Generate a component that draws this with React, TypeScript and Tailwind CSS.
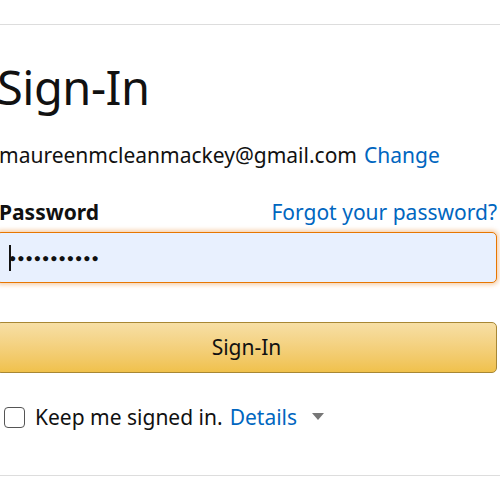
import React from "react";

const App: React.FC = () => {
  return (
    <div className="w-[500px] h-[500px] bg-white overflow-hidden" style={{ fontFamily: "'Noto Sans', Arial, sans-serif" }}>
      <div className="h-[24px]" />
      <div className="border-t border-[#dddddd] w-full" />
      <div className="-ml-[4px] w-[501px] flex flex-col">
        <h1 className="mt-[34px] pl-[1px] text-[47px] leading-[56px] font-normal text-[#111111] tracking-[-0.5px]">Sign-In</h1>
        <div className="mt-[25px] flex items-center text-[21px] leading-[30px] text-[#111111] pl-[3px]">
          <span>maureenmcleanmackey@gmail.com</span>
          <span className="ml-[7px] text-[#0066c0]">Change</span>
        </div>
        <div className="mt-[27px] flex items-center justify-between pl-[3px] text-[21px] leading-[30px]">
          <span className="font-bold text-[#111111]">Password</span>
          <span className="text-[#0066c0]">Forgot your password?</span>
        </div>
        <div className="mt-[5px] h-[51px] rounded-[5px] border border-[#e77600] bg-[#e8f0fe] shadow-[0_0_4px_2px_rgba(228,121,17,0.35)] flex items-center pl-[12px]">
          <div className="w-[2px] h-[26px] bg-[#111111]" />
          <span className="text-[#111111] text-[12px] tracking-[1px] -ml-[2px]">●●●●●●●●●●●</span>
        </div>
        <button className="mt-[39px] h-[51px] rounded-[5px] border border-[#a88734] bg-gradient-to-b from-[#f7dfa5] to-[#f0c14b] text-[21px] text-[#111111] flex items-center justify-center">
          Sign-In
        </button>
        <div className="mt-[29px] flex items-center pl-[8px] text-[21px] leading-[30px] text-[#111111]">
          <span className="w-[21px] h-[21px] rounded-[4px] border-[1.5px] border-[#555555] bg-white" />
          <span className="ml-[10px]">Keep me signed in.</span>
          <span className="ml-[7px] text-[#0066c0]">Details</span>
          <span className="ml-[15px] w-0 h-0 border-l-[6px] border-r-[6px] border-t-[7px] border-l-transparent border-r-transparent border-t-[#777777] -mt-[2px]" />
        </div>
      </div>
      <div className="mt-[43px] border-t border-[#dddddd] w-full" />
    </div>
  );
};

export default App;
